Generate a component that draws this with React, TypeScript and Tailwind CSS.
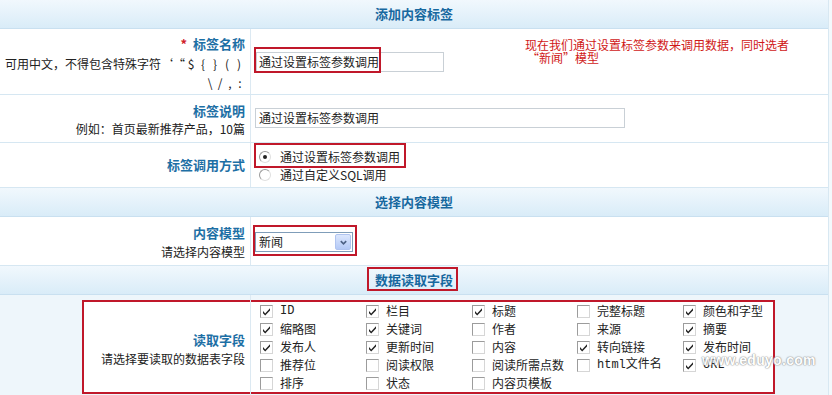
import React from "react";

const cn = { fontFamily: '"Noto Sans CJK SC", "Noto Sans", sans-serif' };

function Header({ title, boxed }: { title: string; boxed?: boolean }) {
  return (
    <div className="relative flex h-[29px] items-center justify-center border-b border-[#c9e0f0] bg-gradient-to-b from-[#f1f8fd] to-[#d9ecf8]">
      <span className="relative text-[13px] font-bold leading-[16px] text-[#17689f]">
        {title}
        {boxed && (
          <span className="absolute left-[-8px] top-[-5px] h-[24px] w-[91px] border-2 border-[#c0182a]" />
        )}
      </span>
    </div>
  );
}

function Check({ on }: { on: boolean }) {
  return (
    <span className="relative inline-block h-[13px] w-[13px] shrink-0 border border-[#9c9c9c] border-r-[#d6d6d6] border-b-[#d6d6d6] bg-white">
      {on && (
        <svg viewBox="0 0 13 13" className="absolute left-[-1px] top-[-1px] h-[13px] w-[13px]">
          <path d="M3 6 L5.2 8.4 L10 3.2 L10 5.4 L5.2 10.6 L3 8.2 Z" fill="#222" />
        </svg>
      )}
    </span>
  );
}

function Radio({ on }: { on: boolean }) {
  return (
    <span className="relative inline-block h-[12px] w-[12px] rounded-full border border-[#9a9a9a] border-r-[#e0e0e0] border-b-[#e0e0e0] bg-white">
      {on && <span className="absolute left-[3px] top-[3px] h-[4px] w-[4px] rounded-full bg-[#222]" />}
    </span>
  );
}

function Sym({ c, w = 12 }: { c: string; w?: number }) {
  return (
    <span className="inline-block text-center" style={{ width: w }}>
      {c}
    </span>
  );
}

const fields: [string, boolean, boolean?][] = [
  ["ID", true, true], ["栏目", true], ["标题", true], ["完整标题", false], ["颜色和字型", true],
  ["缩略图", true], ["关键词", true], ["作者", false], ["来源", false], ["摘要", true],
  ["发布人", true], ["更新时间", true], ["内容", false], ["转向链接", true], ["发布时间", true],
  ["推荐位", false], ["阅读权限", false], ["阅读所需点数", false], ["html文件名", false, true], ["URL", true, true],
  ["排序", false], ["状态", false], ["内容页模板", false],
];

export default function App() {
  return (
    <div className="h-[395px] w-[832px] overflow-hidden bg-[#f3f9fc] text-[12px] text-[#222]" style={cn}>
      <div className="w-[829px] border-r border-[#d8e8f2] bg-white">
        <Header title="添加内容标签" />

        {/* Row 1 */}
        <div className="relative flex h-[66px] border-b border-[#d6e7f2]">
          <div className="w-[251px] shrink-0 border-r border-[#dce9f2] pr-[5px] pt-[5px] text-right leading-[19.5px]">
            <div className="text-[13px] font-bold text-[#1d6fa5]">
              <span className="mr-[6px] text-[#d0202a]">*</span>标签名称
            </div>
            <div className="whitespace-nowrap">
              可用中文<Sym c="，" />不得包含特殊字符
              <Sym c="‘" />
              <Sym c="“" />
              <Sym c="$" />
              <Sym c="{" />
              <Sym c="}" />
              <Sym c="(" />
              <Sym c=")" />
            </div>
            <div className="whitespace-nowrap">
              <Sym c="\" w={10} />
              <Sym c="/" w={10} />
              <Sym c="," w={10} />
              <Sym c=":" w={10} />
            </div>
          </div>
          <div className="relative flex-1 pl-[5px] pt-[23px]">
            <div className="h-[20px] w-[188px] border border-[#c9d0d6] bg-white pl-[2px] leading-[18px]">
              通过设置标签参数调用
            </div>
            <span className="absolute left-[3px] top-[18px] h-[26px] w-[127px] border-2 border-[#c0182a]" />
            <div className="absolute left-[274px] top-[9px] text-[12px] leading-[13px] text-[#d01818]">
              <div>现在我们通过设置标签参数来调用数据<Sym c="，" />同时选者</div>
              <div className="pl-[2px]">“新闻”模型</div>
            </div>
          </div>
        </div>

        {/* Row 2 */}
        <div className="flex h-[48px] border-b border-[#d6e7f2]">
          <div className="w-[251px] shrink-0 border-r border-[#dce9f2] pr-[5px] pt-[7px] text-right leading-[18px]">
            <div className="text-[13px] font-bold text-[#1d6fa5]">标签说明</div>
            <div>例如<Sym c="：" />首页最新推荐产品<Sym c="，" />10篇</div>
          </div>
          <div className="flex-1 pl-[4px] pt-[13px]">
            <div className="h-[20px] w-[370px] border border-[#c9d0d6] bg-white pl-[3px] leading-[18px]">
              通过设置标签参数调用
            </div>
          </div>
        </div>

        {/* Row 3 */}
        <div className="flex h-[45px] border-b border-[#d6e7f2]">
          <div className="flex w-[251px] shrink-0 items-center justify-end border-r border-[#dce9f2] pr-[5px]">
            <span className="text-[13px] font-bold text-[#1d6fa5]">标签调用方式</span>
          </div>
          <div className="relative flex-1 pl-[8px] pt-[5px] leading-[18px]">
            <div className="flex items-center gap-[9px]">
              <Radio on />
              <span>通过设置标签参数调用</span>
            </div>
            <div className="flex items-center gap-[9px]">
              <Radio on={false} />
              <span>通过自定义SQL调用</span>
            </div>
            <span className="absolute left-[3px] top-0 h-[25px] w-[152px] border-2 border-[#c0182a]" />
          </div>
        </div>

        <Header title="选择内容模型" />

        {/* Row 4 */}
        <div className="flex h-[49px] border-b border-[#d6e7f2]">
          <div className="w-[251px] shrink-0 border-r border-[#dce9f2] pr-[5px] pt-[6px] text-right leading-[19px]">
            <div className="text-[13px] font-bold text-[#1d6fa5]">内容模型</div>
            <div>请选择内容模型</div>
          </div>
          <div className="relative flex-1 pl-[4px] pt-[15px]">
            <div className="flex h-[20px] w-[98px] items-center border border-[#7f9db9] bg-white pl-[3px]">
              <span className="flex-1 leading-[18px]">新闻</span>
              <span className="mr-px flex h-[16px] w-[16px] items-center justify-center rounded-[2px] border border-[#b0c4f0] bg-gradient-to-b from-[#dce7fd] to-[#b4c9f6]">
                <svg viewBox="0 0 10 10" className="h-[9px] w-[9px]">
                  <path d="M2 3.5 L5 6.5 L8 3.5" stroke="#4d6185" strokeWidth="1.8" fill="none" />
                </svg>
              </span>
            </div>
            <span className="absolute left-[2px] top-[8px] h-[31px] w-[104px] border-2 border-[#c0182a]" />
          </div>
        </div>

        <Header title="数据读取字段" boxed />

        {/* Row 5 */}
        <div className="relative flex h-[101px] bg-[#eef6fb]">
          <span className="absolute left-[82px] top-[5px] h-[94px] w-[693px] border-2 border-[#c0182a] bg-white" />
          <div className="relative flex w-[251px] shrink-0 items-center justify-end border-r border-[#dce9f2] pr-[5px] pt-[6px] text-right leading-[19px]">
            <div>
              <div className="text-[13px] font-bold text-[#1d6fa5]">读取字段</div>
              <div>请选择要读取的数据表字段</div>
            </div>
          </div>
          <div className="relative flex-1 pl-[9px] pt-[7px]">
            <div className="grid grid-cols-[106px_106px_105px_106px_110px] leading-[18px]">
              {fields.map(([label, on, mono], i) => (
                <div key={i} className="flex h-[18px] items-center">
                  <Check on={on} />
                  <span
                    className="ml-[7px] whitespace-nowrap"
                    style={mono ? { fontFamily: '"Liberation Mono", "Noto Sans CJK SC", monospace', fontSize: 12 } : undefined}
                  >
                    {label}
                  </span>
                </div>
              ))}
            </div>
            <span
              className="absolute left-[451px] top-[57px] text-[14px] font-bold leading-[16px] tracking-[0.3px] text-white"
              style={{
                fontFamily: '"Liberation Sans", Arial, sans-serif',
                textShadow: "0 0 1px #8a8a8a, 0 0 1px #8a8a8a, 0 0 2px #a0a0a0",
                opacity: 0.85,
              }}
            >
              www.eduyo.com
            </span>
          </div>
        </div>
      </div>
    </div>
  );
}
